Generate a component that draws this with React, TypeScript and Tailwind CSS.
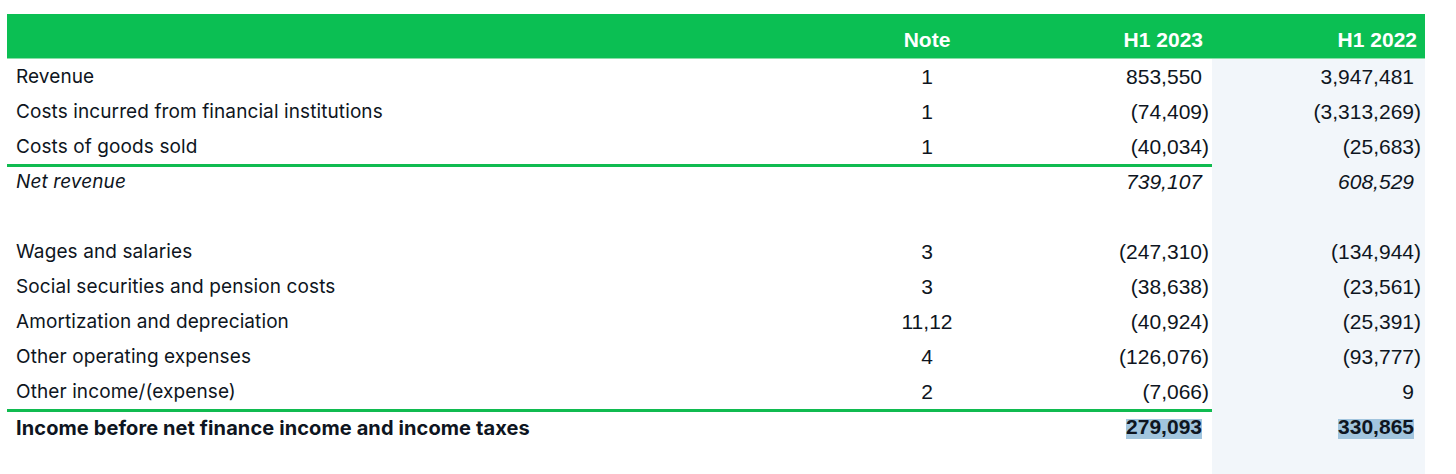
import React from "react";

type Row = {
  label?: string;
  note?: string;
  a?: string;
  b?: string;
  kind?: "italic" | "bold";
  line?: boolean;
};

const rows: Row[] = [
  { label: "Revenue", note: "1", a: "853,550", b: "3,947,481" },
  { label: "Costs incurred from financial institutions", note: "1", a: "(74,409)", b: "(3,313,269)" },
  { label: "Costs of goods sold", note: "1", a: "(40,034)", b: "(25,683)" },
  { label: "Net revenue", a: "739,107", b: "608,529", kind: "italic", line: true },
  {},
  { label: "Wages and salaries", note: "3", a: "(247,310)", b: "(134,944)" },
  { label: "Social securities and pension costs", note: "3", a: "(38,638)", b: "(23,561)" },
  { label: "Amortization and depreciation", note: "11,12", a: "(40,924)", b: "(25,391)" },
  { label: "Other operating expenses", note: "4", a: "(126,076)", b: "(93,777)" },
  { label: "Other income/(expense)", note: "2", a: "(7,066)", b: "9" },
  { label: "Income before net finance income and income taxes", a: "279,093", b: "330,865", kind: "bold", line: true },
  {},
];

const Num = ({ value, bold }: { value?: string; bold?: boolean }) => {
  if (!value) return null;
  const neg = value.startsWith("(");
  return (
    <span>
      {bold ? (
        <span className="inline-block bg-[#a2c5de] leading-[16px] pb-[4px]">{value}</span>
      ) : (
        value
      )}
      {!neg && <span className="invisible">)</span>}
    </span>
  );
};

export default function App() {
  return (
    <div className="bg-white min-h-screen pt-[14px] pl-[7px] text-[#0e1521]">
      <div className="w-[1418px]">
        <div className="flex h-[45px] bg-[#0bbf53] border-b border-[#8adfa7] text-white font-bold text-[21px] font-['Liberation_Sans',Arial,sans-serif] leading-[24px] pt-[14px]">
          <div className="flex-1" />
          <div className="w-[134px] text-center">Note</div>
          <div className="w-[218px] text-right pr-[9px]">H1 2023</div>
          <div className="w-[213px] text-right pr-[8px]">H1 2022</div>
        </div>

        {rows.map((r, i) => (
          <div
            key={i}
            className={`flex h-[35px] items-center ${r.line ? "shadow-[inset_0_3px_0_#10bb50]" : ""} ${
              r.kind === "italic" ? "italic" : ""
            } ${r.kind === "bold" ? "font-bold" : ""}`}
          >
            <div
              className={`flex-1 pl-[9px] pt-[2px] font-['Inter','Liberation_Sans',sans-serif] tracking-[0.1px] ${
                r.kind === "bold" ? "text-[20px]" : "text-[19px]"
              }`}
            >
              {r.label}
            </div>
            <div className="w-[134px] text-center text-[21px] font-['Liberation_Sans',Arial,sans-serif]">{r.note}</div>
            <div className="w-[218px] text-right pr-[3px] text-[21px] font-['Liberation_Sans',Arial,sans-serif]">
              <Num value={r.a} bold={r.kind === "bold"} />
            </div>
            <div className="w-[213px] h-full flex items-center justify-end bg-[#f2f6fa] pr-[4px] text-[21px] font-['Liberation_Sans',Arial,sans-serif]">
              <Num value={r.b} bold={r.kind === "bold"} />
            </div>
          </div>
        ))}
      </div>
    </div>
  );
}
